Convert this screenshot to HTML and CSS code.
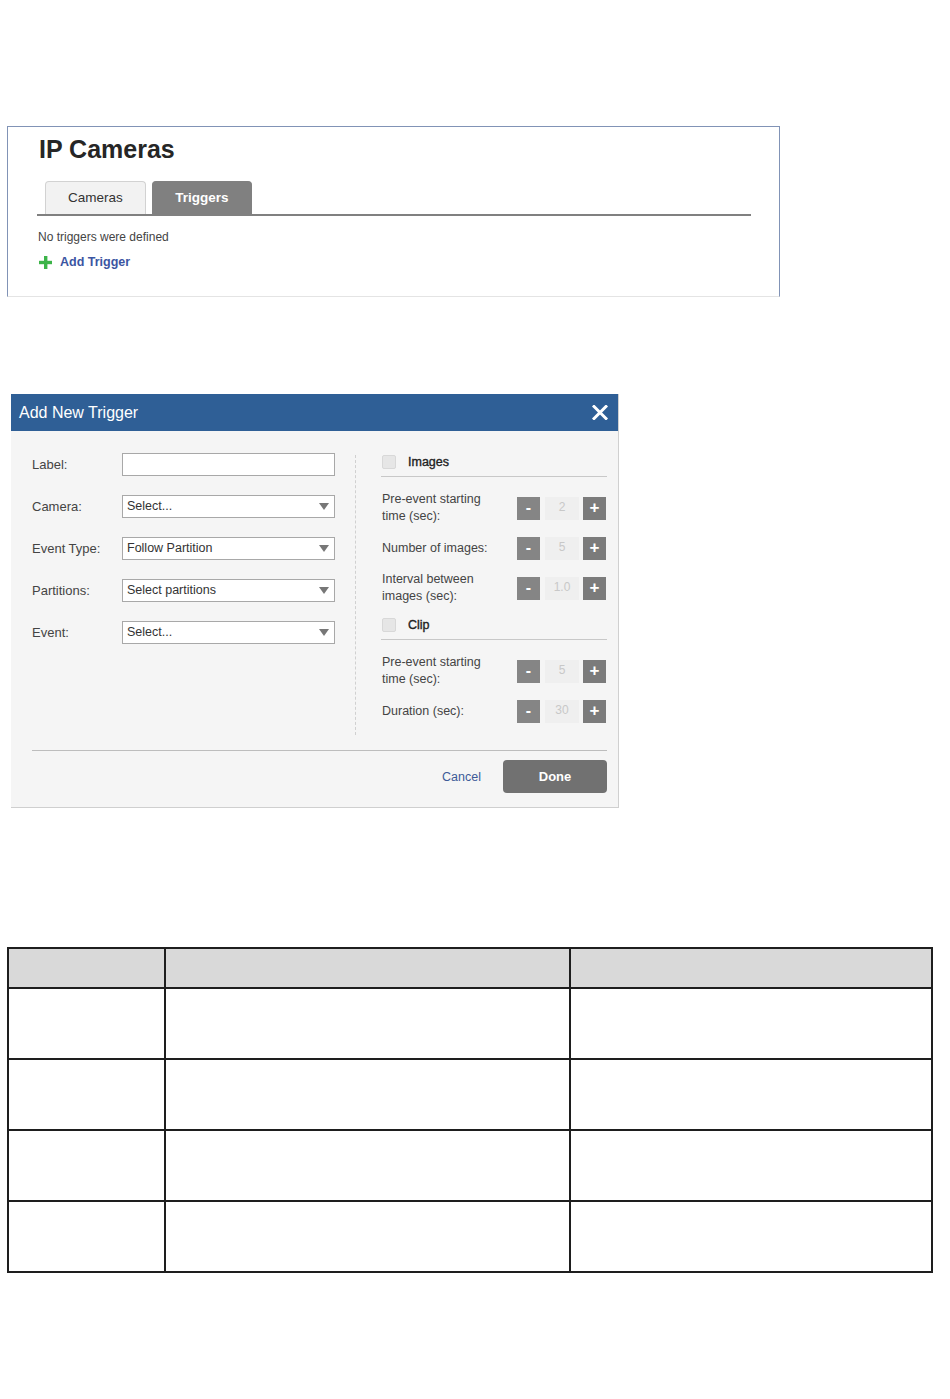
FILE: index.html
```html
<!DOCTYPE html>
<html>
<head>
<meta charset="utf-8">
<link rel="stylesheet" href="styles.css">
</head>
<body>
<div class="page">
  <section class="card">
    <h1 class="card-title">IP Cameras</h1>
    <div class="tabs">
      <div class="tab">Cameras</div>
      <div class="tab tab-active">Triggers</div>
    </div>
    <p class="empty">No triggers were defined</p>
    <a class="add-link">
      <svg class="add-icon" width="13" height="13" viewBox="0 0 13 13"><rect x="5" y="0" width="3.4" height="13" fill="#3cb449"/><rect x="0" y="4.8" width="13" height="3.4" fill="#3cb449"/></svg>
      <span>Add Trigger</span>
    </a>
  </section>

  <div class="dialog">
    <div class="dialog-header">
      <span class="dialog-title">Add New Trigger</span>
      <svg class="close" width="16" height="15" viewBox="0 0 16 15"><path d="M2 1.5 L14 13.5 M14 1.5 L2 13.5" stroke="#fff" stroke-width="3" stroke-linecap="square"/></svg>
    </div>
    <div class="dialog-body">
      <div class="form-cols">
        <div class="form-left">
          <div class="field"><span class="field-label">Label:</span><div class="input"></div></div>
          <div class="field"><span class="field-label">Camera:</span><div class="input select"><span>Select...</span><i class="caret"></i></div></div>
          <div class="field"><span class="field-label">Event Type:</span><div class="input select"><span>Follow Partition</span><i class="caret"></i></div></div>
          <div class="field"><span class="field-label">Partitions:</span><div class="input select"><span>Select partitions</span><i class="caret"></i></div></div>
          <div class="field"><span class="field-label">Event:</span><div class="input select"><span>Select...</span><i class="caret"></i></div></div>
        </div>
        <div class="divider"></div>
        <div class="form-right">
          <div class="section-head"><span class="checkbox"></span><span class="section-label">Images</span></div>
          <div class="rows">
            <div class="srow"><span class="srow-label">Pre-event starting<br>time (sec):</span>
              <div class="stepper"><span class="step-btn minus">-</span><span class="step-val">2</span><span class="step-btn plus">+</span></div></div>
            <div class="srow"><span class="srow-label">Number of images:</span>
              <div class="stepper"><span class="step-btn minus">-</span><span class="step-val">5</span><span class="step-btn plus">+</span></div></div>
            <div class="srow"><span class="srow-label">Interval between<br>images (sec):</span>
              <div class="stepper"><span class="step-btn minus">-</span><span class="step-val">1.0</span><span class="step-btn plus">+</span></div></div>
          </div>
          <div class="section-head section-head-2"><span class="checkbox"></span><span class="section-label">Clip</span></div>
          <div class="rows">
            <div class="srow"><span class="srow-label">Pre-event starting<br>time (sec):</span>
              <div class="stepper"><span class="step-btn minus">-</span><span class="step-val">5</span><span class="step-btn plus">+</span></div></div>
            <div class="srow"><span class="srow-label">Duration (sec):</span>
              <div class="stepper"><span class="step-btn minus">-</span><span class="step-val">30</span><span class="step-btn plus">+</span></div></div>
          </div>
        </div>
      </div>
      <div class="dialog-footer">
        <a class="cancel">Cancel</a>
        <button class="done">Done</button>
      </div>
    </div>
  </div>

  <table class="grid">
    <thead>
      <tr><th class="c1"></th><th class="c2"></th><th class="c3"></th></tr>
    </thead>
    <tbody>
      <tr><td></td><td></td><td></td></tr>
      <tr><td></td><td></td><td></td></tr>
      <tr><td></td><td></td><td></td></tr>
      <tr><td></td><td></td><td></td></tr>
    </tbody>
  </table>
</div>
</body>
</html>
```
FILE: styles.css
```css
* { box-sizing: border-box; }
body {
  margin: 0;
  font-family: "Liberation Sans", Arial, sans-serif;
  background: #fff;
  color: #333;
}
.page { padding-top: 126px; }

/* Card */
.card {
  margin-left: 7px;
  width: 773px;
  height: 171px;
  border: 1px solid #8193b6;
  border-bottom-color: #e4e4e4;
  padding-top: 7px;
}
.card-title {
  margin: 0 0 0 31px;
  font-size: 25px;
  line-height: 30px;
  font-weight: bold;
  color: #262626;
}
.tabs {
  margin: 17px 0 0 29px;
  width: 714px;
  display: flex;
  gap: 6px;
  padding-left: 8px;
  border-bottom: 2px solid #808080;
}
.tab {
  width: 101px;
  height: 33px;
  line-height: 32px;
  text-align: center;
  font-size: 13.5px;
  color: #333;
  background: #f2f2f2;
  border: 1px solid #d2d2d2;
  border-bottom: none;
  border-radius: 4px 4px 0 0;
}
.tab-active {
  width: 100px;
  background: #808080;
  border-color: #808080;
  color: #fff;
  font-weight: bold;
}
.empty {
  margin: 13px 0 0 30px;
  font-size: 12px;
  line-height: 16px;
  color: #444;
}
.add-link {
  margin: 9px 0 0 31px;
  display: flex;
  align-items: center;
  gap: 8px;
  font-size: 12.5px;
  line-height: 16px;
  font-weight: bold;
  color: #3b55a2;
}

/* Dialog */
.dialog {
  margin: 97px 0 0 11px;
  width: 608px;
  background: #f5f5f5;
  border-right: 1px solid #d0d0d0;
  border-bottom: 1px solid #cfcfcf;
}
.dialog-header {
  height: 37px;
  background: #2f5f96;
  display: flex;
  align-items: center;
  justify-content: space-between;
  padding: 0 10px 0 8px;
}
.dialog-title {
  color: #fff;
  font-size: 16px;
}
.dialog-body {
  padding: 16px 11px 14px 21px;
}
.form-cols {
  display: flex;
  align-items: flex-start;
}
.form-left {
  width: 303px;
  display: flex;
  flex-direction: column;
  gap: 8px;
}
.field {
  height: 34px;
  display: flex;
  align-items: center;
}
.field-label {
  width: 90px;
  font-size: 13px;
  color: #444;
}
.input {
  width: 213px;
  height: 23px;
  background: #fff;
  border: 1px solid #a8a8a8;
}
.select {
  display: flex;
  align-items: center;
  justify-content: space-between;
  padding: 0 5px 0 4px;
  font-size: 12.5px;
  color: #333;
}
.caret {
  width: 0;
  height: 0;
  border-left: 5.5px solid transparent;
  border-right: 5.5px solid transparent;
  border-top: 7px solid #777;
}
.divider {
  align-self: stretch;
  margin: 8px 0 -7px 20px;
  border-left: 1px dashed #d0d0d0;
}
.form-right {
  margin-left: 25px;
  width: 226px;
}
.section-head {
  height: 30px;
  display: flex;
  align-items: center;
  padding-left: 1px;
  border-bottom: 1px solid #c8c8c8;
}
.section-head-2 { margin-top: 5px; }
.checkbox {
  width: 14px;
  height: 14px;
  background: #e6e6e6;
  border: 1px solid #d8d8d8;
  border-radius: 2px;
  margin-right: 12px;
}
.section-label {
  font-size: 12.5px;
  color: #222;
  -webkit-text-stroke: 0.35px #222;
}
.rows {
  padding-top: 14px;
  display: flex;
  flex-direction: column;
  gap: 6px;
}
.srow {
  height: 34px;
  display: flex;
  align-items: center;
  justify-content: space-between;
  padding: 0 1px;
}
.srow-label {
  font-size: 12.5px;
  line-height: 17px;
  color: #444;
}
.stepper {
  display: flex;
  align-items: center;
}
.step-btn {
  width: 23px;
  height: 23px;
  background: #858585;
  color: #fff;
  font-weight: bold;
  text-align: center;
  line-height: 22px;
  font-size: 16px;
}
.step-btn.plus { background: #7b7b7b; font-size: 17px; }
.step-val {
  width: 34px;
  height: 23px;
  margin: 0 4px 0 5px;
  background: #efefef;
  color: #c8c8c8;
  font-size: 12px;
  text-align: center;
  line-height: 21px;
}
.dialog-footer {
  margin-top: 22px;
  border-top: 1px solid #bdbdbd;
  padding-top: 9px;
  display: flex;
  justify-content: flex-end;
  align-items: center;
  gap: 22px;
}
.cancel {
  font-size: 12.5px;
  color: #3d5b98;
}
.done {
  width: 104px;
  height: 33px;
  border: none;
  border-radius: 4px;
  background: #717171;
  color: #fff;
  font-family: "Liberation Sans", Arial, sans-serif;
  font-weight: bold;
  font-size: 13px;
}

/* Table */
.grid {
  margin: 139px 0 0 7px;
  width: 926px;
  border-collapse: collapse;
}
.grid th, .grid td {
  border: 2px solid #1e1e1e;
  padding: 0;
}
.grid th {
  height: 40px;
  background: #d9d9d9;
}
.grid td { height: 71px; }
.c1 { width: 157px; }
.c2 { width: 406px; }
.c3 { width: 363px; }
```
